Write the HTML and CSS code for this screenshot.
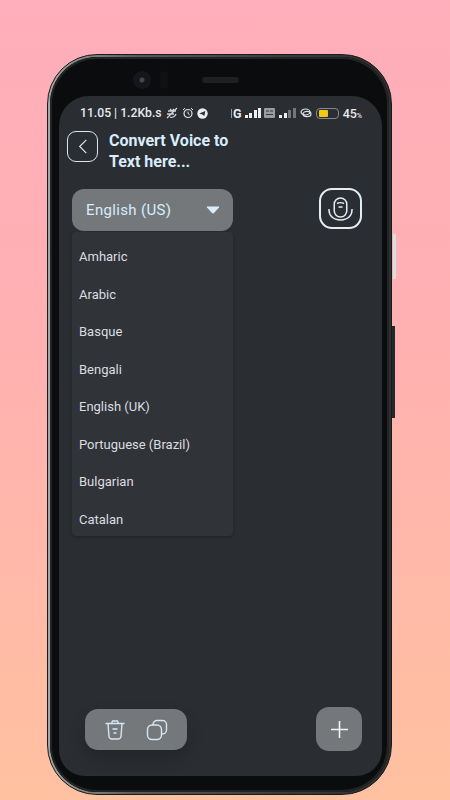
FILE: index.html
```html
<!DOCTYPE html>
<html lang="en">
<head>
<meta charset="utf-8">
<title>Voice to Text</title>
<link rel="stylesheet" href="styles.css">
</head>
<body>
<div class="phone">
  <span class="side-light"></span>
  <span class="side-dark"></span>
  <div class="bezel">
    <div class="notch">
      <span class="camera"></span>
      <span class="sensor"></span>
      <span class="speaker"></span>
    </div>
    <div class="screen">
      <div class="status">
        <div class="status-left">
          <span class="clock">11.05 | 1.2Kb.s</span>
          <svg viewBox="0 0 14 14" width="14" height="14"><path d="M3 5h8M2 8h7M5 3l2 2 2-2M5 11c2 1 5 0 6-3M2 12 12 2" fill="none" stroke="#cfd3d6" stroke-width="1.3"/></svg>
          <svg viewBox="0 0 12 12" width="12" height="12"><circle cx="6" cy="6.500" r="4" fill="none" stroke="#e4e6e8" stroke-width="1.200"/><path d="M6 4.500V6.500L7.500 7.500M1 3l2-2M11 3 9 1" fill="none" stroke="#e4e6e8" stroke-width="1"/></svg>
          <svg viewBox="0 0 11 11" width="11" height="11"><circle cx="5.500" cy="5.500" r="5.200" fill="#eceef0"/><path d="M2.300 5.500 8.300 3 7.400 8 5.300 6.500z" fill="#2b2e33"/></svg>
        </div>
        <div class="status-right">
          <span class="net"><i></i>G</span>
          <span class="bars"><i class="b1"></i><i class="b2"></i><i class="b3"></i><i class="b4"></i></span>
          <svg class="volte" viewBox="0 0 11 10" width="11" height="10"><rect width="11" height="10" rx="1" fill="#9a9da0"/><path d="M2 3h3M6 3h3M2 6.500h7" stroke="#34373b" stroke-width="1.200"/></svg>
          <span class="bars"><i class="b1"></i><i class="b2"></i><i class="b3 dim"></i><i class="b4 dim"></i></span>
          <svg class="link" viewBox="0 0 12 10" width="12" height="10"><ellipse cx="5.500" cy="4" rx="4.500" ry="3" fill="none" stroke="#dfe2e4" stroke-width="1.200"/><ellipse cx="7" cy="6" rx="4" ry="2.600" fill="none" stroke="#dfe2e4" stroke-width="1.200"/></svg>
          <span class="battery"><i></i></span>
          <span class="pct">45<small>%</small></span>
        </div>
      </div>
      <header class="head">
        <button class="back" type="button" aria-label="Back">
          <svg viewBox="0 0 12 20" width="10" height="17"><path d="M10 2 2 10l8 8" fill="none" stroke="#d6e6f2" stroke-width="1.400"/></svg>
        </button>
        <h1>Convert Voice to<br>Text here...</h1>
      </header>
      <div class="controls">
        <div class="select-col">
          <div class="select">
            <span>English (US)</span>
            <svg viewBox="0 0 14 8" width="14" height="8"><path d="M1 1.500c-.5-.6 0-1 .6-1h10.800c.6 0 1.100.4.600 1L8 7c-.5.500-1.500.500-2 0z" fill="#d8ecfb"/></svg>
          </div>
          <ul class="menu">
            <li>Amharic</li>
            <li>Arabic</li>
            <li>Basque</li>
            <li>Bengali</li>
            <li>English (UK)</li>
            <li>Portuguese (Brazil)</li>
            <li>Bulgarian</li>
            <li>Catalan</li>
          </ul>
        </div>
        <button class="mic" type="button" aria-label="Record">
          <svg viewBox="0 0 25 24" width="25" height="24"><rect x="6.250" y="1" width="12.500" height="19" rx="6.250" fill="none" stroke="#e2edf5" stroke-width="1.500"/><path d="M1 12v1c0 5.500 4 10 11.500 10S24 18.500 24 13v-1" fill="none" stroke="#e2edf5" stroke-width="1.500"/><path d="M9 6.500c2-1 5-1 7 0M10.500 10h4" fill="none" stroke="#e2edf5" stroke-width="1.400"/></svg>
        </button>
      </div>
      <footer class="foot">
        <div class="tools">
          <svg viewBox="0 0 22 22" width="22" height="22"><path d="M1.500 4.500h19M7.500 4.500l1-2.500h5l1 2.500M4 4.500l1 13a3 3 0 0 0 3 2.500h6a3 3 0 0 0 3-2.500l1-13M8.500 10h5M9.500 14h3" fill="none" stroke="#d6e6f2" stroke-width="1.400"/></svg>
          <svg viewBox="0 0 22 22" width="22" height="22"><rect x="1.500" y="6" width="14" height="14.500" rx="4.500" fill="none" stroke="#d6e6f2" stroke-width="1.400"/><path d="M7 6V5.500a4 4 0 0 1 4-4h5.500a4 4 0 0 1 4 4V11a4 4 0 0 1-4 4h-1" fill="none" stroke="#d6e6f2" stroke-width="1.400"/></svg>
        </div>
        <button class="add" type="button" aria-label="Add">
          <svg viewBox="0 0 17 17" width="17" height="17"><path d="M8.500 0v17M0 8.500h17" stroke="#f2f4f5" stroke-width="1.600"/></svg>
        </button>
      </footer>
    </div>
  </div>
</div>
</body>
</html>
```
FILE: styles.css
```css
* { box-sizing: border-box; }
html, body { margin: 0; height: 800px; overflow: hidden; }
body {
  background: linear-gradient(180deg, #ffaebb 0%, #ffb0b2 40%, #ffc1a0 100%);
  padding: 54px 0 0 47px;
  font-family: Roboto, "Liberation Sans", sans-serif;
}
.phone {
  position: relative;
  width: 345px;
  height: 741px;
  padding: 2px;
  border-radius: 50px;
  border: 1px solid #191a1b;
  background: linear-gradient(90deg, #a5a6a6 0%, #5a5b5b 25%, #3a3b3b 70%, #2e2f2f 100%);
}
.side-light {
  position: absolute;
  left: 345px;
  top: 179px;
  width: 3px;
  height: 45px;
  background: #d9dde0;
}
.side-dark {
  position: absolute;
  left: 344px;
  top: 271px;
  width: 3px;
  height: 92px;
  background: #23282a;
}
.bezel {
  height: 100%;
  padding: 39px 5px 0 9px;
  border-radius: 47px;
  background: #0b0c0d;
  box-shadow: inset 0 0 0 2px #232424;
}
.notch {
  position: absolute;
  top: 10px;
  left: 85px;
  display: flex;
  align-items: center;
  height: 30px;
}
.camera {
  width: 18px;
  height: 18px;
  border-radius: 50%;
  background: radial-gradient(circle, #3d4657 0 2px, #14161a 3px, #16171a 100%);
}
.sensor {
  width: 8px;
  height: 18px;
  margin-left: 9px;
  border-radius: 4px;
  background: #101113;
}
.speaker {
  width: 37px;
  height: 6px;
  margin-left: 34px;
  border-radius: 3px;
  background: #1f2022;
}
.screen {
  width: 323px;
  height: 680px;
  border-radius: 30px 30px 26px 26px;
  background: #2a2d32;
  display: flex;
  flex-direction: column;
}
.status {
  display: flex;
  justify-content: space-between;
  align-items: center;
  height: 14px;
  margin-top: 10px;
  padding: 0 20px 0 21px;
  color: #e8eaec;
  font-size: 12.500px;
  font-weight: 500;
}
.status-left, .status-right { display: flex; align-items: center; }
.status-left { gap: 3px; }
.status-right { gap: 3px; }
.clock { font-size: 12.200px; }
.net { display: inline-flex; align-items: center; gap: 1px; font-size: 12.500px; font-weight: 700; }
.net i { width: 1px; height: 9px; background: #9a9da0; }
.bars { display: inline-flex; align-items: flex-end; gap: 1.500px; height: 10px; }
.bars i { width: 3px; background: #eceef0; display: block; }
.b1 { height: 3px; }
.b2 { height: 5px; }
.b3 { height: 8px; }
.b4 { height: 10px; }
.bars .dim { background: #73767a; }
.status-right .volte { margin-left: 0; margin-right: 1px; }
.link { margin-left: 1px; }
.battery {
  width: 23px;
  height: 11px;
  border: 1px solid #85888b;
  border-radius: 4px;
  padding: 1px 2px;
  margin-left: 1px;
}
.battery i { display: block; width: 9px; height: 7px; background: #f5c518; border-radius: 1px; }
.pct { margin-left: 1px; font-size: 12.500px; }
.pct small { font-size: 7px; }
.head {
  display: flex;
  align-items: flex-start;
  gap: 11px;
  margin-top: 11px;
  padding-left: 8px;
}
.back {
  width: 31px;
  height: 31px;
  padding: 0;
  display: flex;
  align-items: center;
  justify-content: center;
  border: 1px solid #d6e6f2;
  border-radius: 9px;
  background: transparent;
}
.head h1 {
  margin: -1px 0 0;
  color: #d8ecfb;
  font-size: 16px;
  font-weight: 700;
  line-height: 21px;
}
.controls {
  display: flex;
  justify-content: space-between;
  align-items: flex-start;
  margin-top: 17px;
  padding: 0 20px 0 13px;
}
.select-col { width: 161px; }
.select {
  height: 42px;
  display: flex;
  align-items: center;
  justify-content: space-between;
  padding: 0 13px 0 14px;
  border-radius: 12px;
  background: #74787b;
  color: #d8ecfb;
  font-size: 15px;
  letter-spacing: .35px;
}
.menu {
  list-style: none;
  margin: 1px 0 0;
  padding: 6px 0 0;
  height: 304px;
  border-radius: 4px;
  background: #303338;
  box-shadow: 0 1px 3px rgba(0, 0, 0, .25);
  color: #dcdde0;
  font-size: 13px;
}
.menu li {
  height: 37.500px;
  display: flex;
  align-items: center;
  padding-left: 7px;
}
.mic {
  width: 43px;
  height: 41px;
  margin-top: -1px;
  padding: 0;
  display: flex;
  align-items: center;
  justify-content: center;
  border: 2px solid #e2edf5;
  border-radius: 13px;
  background: transparent;
}
.foot {
  margin-top: auto;
  display: flex;
  justify-content: space-between;
  align-items: flex-end;
  padding: 0 20px 26px 26px;
}
.tools {
  width: 102px;
  height: 41px;
  display: flex;
  align-items: center;
  justify-content: center;
  gap: 20px;
  border-radius: 13px;
  background: #74787b;
  box-shadow: 0 8px 16px rgba(0, 0, 0, .18);
}
.add {
  width: 46px;
  height: 44px;
  margin-bottom: -1px;
  padding: 0;
  display: flex;
  align-items: center;
  justify-content: center;
  border: 0;
  border-radius: 13px;
  background: #74787b;
}
```
